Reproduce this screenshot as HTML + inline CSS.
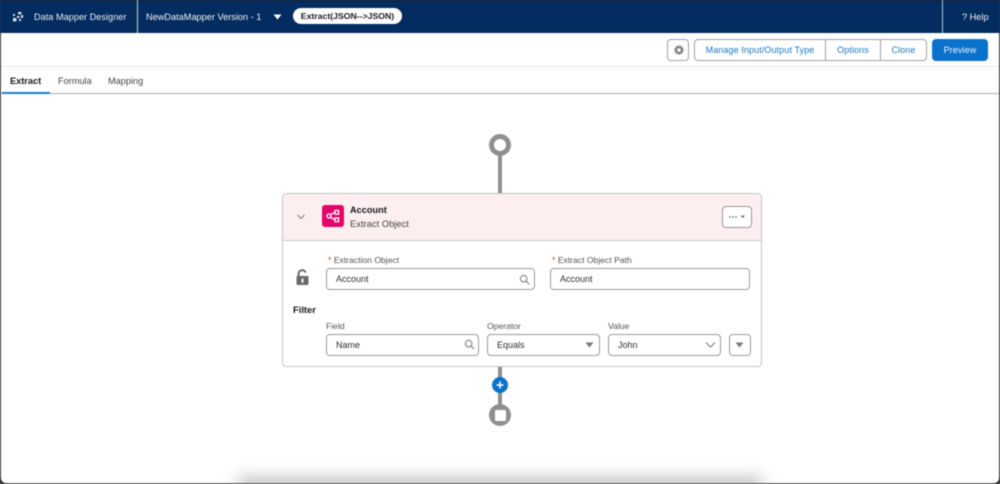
<!DOCTYPE html>
<html>
<head>
<meta charset="utf-8">
<style>
*{box-sizing:border-box}
html,body{margin:0;padding:0;width:1000px;height:484px;overflow:hidden;background:#4a4a4a}
#r{position:relative;width:1000px;height:484px;background:#fff;overflow:hidden;font-family:"Liberation Sans",sans-serif;color:#181818;filter:blur(.45px)}
#r div,#r svg{position:absolute}
.t{white-space:nowrap;line-height:14px}
.in{background:#fff;border:1px solid #9a9a9a;border-radius:4px;font-size:9px;line-height:21px;padding-left:9px;color:#2e2e2e}
.lb{font-size:8.6px;color:#555;white-space:nowrap;line-height:12px}
.lb b{color:#c23934;font-weight:400}
.btn{background:#fff;border:1px solid #a0a0a0;color:#1b78c4;font-size:9px;letter-spacing:.1px;text-align:center;line-height:20px}
</style>
</head>
<body>
<div id="r">
  <div style="left:0;top:0;width:1000px;height:33px;background:#032d60;border-top:1px solid #0b1a33"></div>
  <svg style="left:11px;top:10px" width="14" height="14" viewBox="0 0 14 14" fill="#dfe6f0">
    <rect x="2" y="8" width="3.4" height="3.4" rx=".6"/><rect x="7" y="2" width="3.4" height="2.4" rx=".6"/><rect x="2" y="4" width="2" height="2" rx=".5"/><rect x="6" y="6" width="2.4" height="2" rx=".5"/><rect x="10" y="5" width="2" height="3" rx=".5"/><rect x="8" y="9" width="2" height="2" rx=".5"/>
  </svg>
  <div class="t" style="left:34px;top:10px;font-size:9.2px;color:#e6ebf3">Data Mapper Designer</div>
  <div style="left:137px;top:0;width:1px;height:33px;background:#c9d3e2"></div>
  <div class="t" style="left:146px;top:10px;font-size:9.2px;color:#eef2f7">NewDataMapper Version - 1</div>
  <svg style="left:273px;top:14px" width="9" height="6" viewBox="0 0 9 6"><path d="M.5 .5H8.5L4.5 5.5Z" fill="#fff"/></svg>
  <div class="t" style="left:293px;top:8px;width:109px;height:16px;border-radius:8px;background:#fff;font-size:8.7px;font-weight:700;line-height:17px;text-align:center;color:#1b1b1b">Extract(JSON--&gt;JSON)</div>
  <div style="left:942px;top:0;width:1px;height:33px;background:#b9c5d6"></div>
  <div class="t" style="left:962px;top:10px;font-size:9.2px;color:#eef2f7">? Help</div>

  <div class="btn" style="left:667px;top:39px;width:22px;height:22px;border-radius:4px"></div>
  <svg style="left:673.5px;top:45px" width="10" height="10" viewBox="0 0 11 11"><circle cx="5.5" cy="5.5" r="3" fill="none" stroke="#777" stroke-width="2"/><circle cx="5.5" cy="5.5" r="4.6" fill="none" stroke="#777" stroke-width="1.4" stroke-dasharray="1.6 1.3"/></svg>
  <div class="btn" style="left:694px;top:39px;width:132px;height:22px;border-radius:4px 0 0 4px">Manage Input/Output Type</div>
  <div class="btn" style="left:825px;top:39px;width:56px;height:22px">Options</div>
  <div class="btn" style="left:880px;top:39px;width:47px;height:22px;border-radius:0 4px 4px 0">Clone</div>
  <div class="btn" style="left:932px;top:39px;width:56px;height:22px;border-radius:4px;background:#0b72cc;border-color:#0b72cc;color:#e8f2fb">Preview</div>

  <div style="left:0;top:66px;width:1000px;height:1px;background:#e6e6e6"></div>
  <div class="t" style="left:10px;top:74px;font-size:9.2px;font-weight:700">Extract</div>
  <div class="t" style="left:58px;top:74px;font-size:9.2px;color:#444">Formula</div>
  <div class="t" style="left:108px;top:74px;font-size:9.2px;color:#444">Mapping</div>
  <div style="left:0;top:93px;width:1000px;height:1px;background:#a9a9a9"></div>
  <div style="left:2px;top:92px;width:48px;height:2px;background:#1b7fd0"></div>

  <div style="left:498px;top:150px;width:4px;height:44px;background:#8f8f8f"></div>
  <div style="left:489px;top:134px;width:22px;height:22px;border-radius:50%;border:5px solid #8f8f8f;background:#fff"></div>

  <div style="left:282px;top:193px;width:480px;height:174px;background:#fff;border:1px solid #c4c4c4;border-radius:4px"></div>
  <div style="left:283px;top:194px;width:478px;height:47px;background:#fdeef0;border-bottom:1px solid #c9c9c9;border-radius:3px 3px 0 0"></div>
  <svg style="left:296px;top:213px" width="10" height="8" viewBox="0 0 10 8"><path d="M1.5 2 5 5.5 8.5 2" fill="none" stroke="#777" stroke-width=".9"/></svg>
  <div style="left:322px;top:205px;width:22px;height:22px;border-radius:3px;background:#e3066a"></div>
  <svg style="left:322px;top:205px" width="22" height="22" viewBox="0 0 22 22" fill="none" stroke="#fff" stroke-width="1.3"><circle cx="7" cy="11" r="2"/><rect x="13" y="5.5" width="3.6" height="3.6"/><rect x="13" y="13" width="3.6" height="3.6"/><path d="M8.6 9.6 12.4 7.6M8.6 12.4 12.4 14.6"/></svg>
  <div class="t" style="left:350px;top:203px;font-size:9.2px;font-weight:700">Account</div>
  <div class="t" style="left:350px;top:217px;font-size:9.4px;color:#444">Extract Object</div>
  <div style="left:722px;top:206px;width:30px;height:22px;background:#fff;border:1px solid #999;border-radius:4px"></div>
  <svg style="left:728px;top:214px" width="18" height="6" viewBox="0 0 18 6" fill="#777"><circle cx="2" cy="3" r=".9"/><circle cx="5" cy="3" r=".9"/><circle cx="8" cy="3" r=".9"/><path d="M12.5 1.5H17L14.75 4.2Z"/></svg>

  <svg style="left:295px;top:269px" width="15" height="17" viewBox="0 0 15 17"><path d="M3.6 7V4.6A3.6 3.6 0 0 1 10.6 3.6" fill="none" stroke="#6b6b6b" stroke-width="2"/><path d="M1.5 7H13.5V15A1 1 0 0 1 12.5 16H2.5A1 1 0 0 1 1.5 15Z" fill="#6b6b6b"/><rect x="6.6" y="9.6" width="1.9" height="4" fill="#fff"/></svg>
  <div class="lb" style="left:328px;top:254px"><b>*</b> Extraction Object</div>
  <div class="in" style="left:326px;top:268px;width:209px;height:22px">Account</div>
  <svg style="left:519px;top:274px" width="11" height="11" viewBox="0 0 13 13" fill="none" stroke="#777" stroke-width="1.2"><circle cx="5.5" cy="5.5" r="3.9"/><path d="M8.4 8.4 12 12"/></svg>
  <div class="lb" style="left:552px;top:254px"><b>*</b> Extract Object Path</div>
  <div class="in" style="left:550px;top:268px;width:200px;height:22px">Account</div>

  <div class="t" style="left:293px;top:303px;font-size:9.4px;font-weight:700">Filter</div>
  <div class="lb" style="left:326px;top:320px">Field</div>
  <div class="in" style="left:326px;top:334px;width:153px;height:22px">Name</div>
  <svg style="left:464px;top:339px" width="11" height="11" viewBox="0 0 13 13" fill="none" stroke="#777" stroke-width="1.2"><circle cx="5.5" cy="5.5" r="3.9"/><path d="M8.4 8.4 12 12"/></svg>
  <div class="lb" style="left:487px;top:320px">Operator</div>
  <div class="in" style="left:487px;top:334px;width:113px;height:22px">Equals</div>
  <svg style="left:585px;top:342px" width="9" height="6" viewBox="0 0 9 6"><path d="M.5 .5H8.5L4.5 5.5Z" fill="#777"/></svg>
  <div class="lb" style="left:608px;top:320px">Value</div>
  <div class="in" style="left:608px;top:334px;width:113px;height:22px">John</div>
  <svg style="left:705px;top:341px" width="11" height="8" viewBox="0 0 11 8"><path d="M1 1.5 5.5 6 10 1.5" fill="none" stroke="#777" stroke-width="1"/></svg>
  <div class="in" style="left:729px;top:334px;width:22px;height:22px;padding:0"></div>
  <svg style="left:735px;top:342px" width="9" height="6" viewBox="0 0 9 6"><path d="M.5 .5H8.5L4.5 5.5Z" fill="#777"/></svg>

  <div style="left:498px;top:367px;width:4px;height:38px;background:#8f8f8f"></div>
  <div style="left:492px;top:377px;width:16px;height:16px;border-radius:50%;background:#0b72cc"></div>
  <svg style="left:492px;top:377px" width="16" height="16" viewBox="0 0 16 16"><path d="M8 4.5V11.5M4.5 8H11.5" stroke="#fff" stroke-width="1.5"/></svg>
  <div style="left:489px;top:404px;width:22px;height:22px;border-radius:50%;background:#8f8f8f"></div>
  <div style="left:494.5px;top:409.5px;width:11px;height:11px;border-radius:1.5px;background:#fff"></div>

  <div style="left:238px;top:478px;width:524px;height:14px;background:#b8b8b8;filter:blur(8px)"></div>

  <div style="left:0;top:33px;width:1px;height:451px;background:#555"></div>
  <div style="left:999px;top:33px;width:1px;height:451px;background:#555"></div>
  <div style="left:0;top:483px;width:1000px;height:1px;background:#777"></div>
  <svg style="left:0;top:477px" width="7" height="7" viewBox="0 0 7 7"><path d="M0 0V7H7V6.4A5.6 5.6 0 0 1 1 .6V0Z" fill="#333"/></svg>
  <svg style="left:993px;top:477px" width="7" height="7" viewBox="0 0 7 7"><path d="M7 0V7H0V6.4A5.6 5.6 0 0 0 6 .6V0Z" fill="#333"/></svg>
</div>
</body>
</html>
